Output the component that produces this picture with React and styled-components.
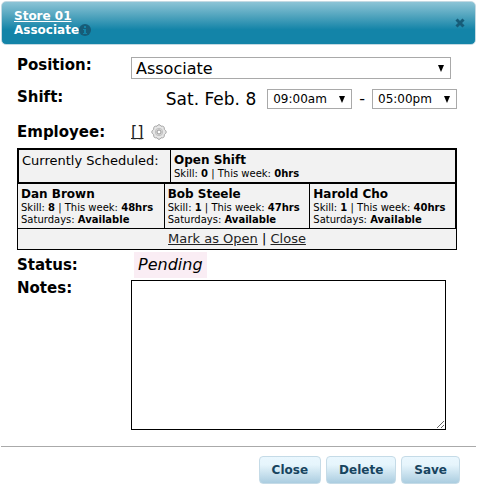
import React from "react";
import styled, { createGlobalStyle } from "styled-components";

const GlobalStyle = createGlobalStyle`
  *, *::before, *::after { box-sizing: border-box; }
  body {
    margin: 0;
    background: #fff;
    color: #000;
    font: 16px/20px "DejaVu Sans", Verdana, sans-serif;
  }
  button, select, textarea { font-family: inherit; color: inherit; margin: 0; }
`;

const Dialog = styled.section`
  padding: 1px;
`;

const Header = styled.header`
  display: flex;
  align-items: center;
  justify-content: space-between;
  height: 44px;
  padding: 0 10px 0 12px;
  border: 1px solid #c3d9e2;
  border-radius: 5px;
  background: linear-gradient(#8cc4d6 0%, #4fa3bd 34%, #1384a8 66%, #1384a8 100%);
  color: #fff;
`;

const Title = styled.h1`
  margin: 0;
  font-size: 12px;
  line-height: 14px;
`;

const TitleLink = styled.a`
  color: #fff;
`;

const TitleLine = styled.span`
  display: flex;
  align-items: center;
`;

const IconButton = styled.button`
  display: flex;
  padding: 0;
  border: 0;
  background: none;
  cursor: pointer;
`;

const Body = styled.div`
  padding: 12px 19px 16px 16px;
`;

const Row = styled.div`
  display: grid;
  grid-template-columns: 114px minmax(0, 1fr);
  align-items: ${(p) => p.$align || "start"};
  min-height: ${(p) => p.$height || "0"};
`;

const Label = styled.label`
  font-size: 15px;
  line-height: 16px;
  font-weight: bold;
`;

const SelectBox = styled.span`
  display: grid;
  align-items: center;
  width: ${(p) => p.$width || "auto"};
  margin-right: ${(p) => p.$right || "0"};

  > * { grid-area: 1 / 1; }
  > svg { justify-self: end; margin-right: 7px; pointer-events: none; }
`;

const Select = styled.select`
  appearance: none;
  width: 100%;
  height: ${(p) => (p.$small ? "20px" : "22px")};
  padding: 0 16px 0 ${(p) => (p.$small ? "5px" : "4px")};
  border: 1px solid #a9a9a9;
  border-radius: 0;
  background: #fff;
  font-size: ${(p) => (p.$small ? "12px" : "16px")};
`;

const ShiftFields = styled.div`
  display: flex;
  align-items: center;
  justify-content: flex-end;
  gap: 7px;
`;

const ShiftDate = styled.span`
  margin-right: 4px;
  font-size: 17px;
`;

const EmployeeValue = styled.div`
  display: flex;
  align-items: center;
  gap: 8px;
`;

const EmployeeLink = styled.a`
  color: #222;
  text-decoration-skip-ink: none;
`;

const Schedule = styled.div`
  border: 1px solid #000;
  background: #f2f2f2;
  font-size: 12px;
  line-height: 15px;
`;

const Table = styled.table`
  width: 100%;
  table-layout: fixed;
  border-collapse: separate;
  border-spacing: 0;
  border: solid #000;
  border-width: ${(p) => p.$border};
`;

const Cell = styled.td`
  padding: 3px 0 2px 3px;
  vertical-align: top;
  white-space: nowrap;

  & + & { border-left: 1px solid #000; }
`;

const HeadCell = styled.th`
  width: 152px;
  padding: 3px 0 2px 3px;
  border-right: 1px solid #000;
  font-size: 13px;
  font-weight: normal;
  text-align: left;
  vertical-align: top;
  white-space: nowrap;
`;

const Name = styled.div`
  font-weight: bold;
`;

const Detail = styled.div`
  font-size: 10px;
  line-height: 12px;
`;

const Actions = styled.div`
  text-align: center;
  font-size: 13px;
  line-height: 20px;

  a { color: #222; }
`;

const Status = styled.em`
  justify-self: start;
  margin-left: 3px;
  padding: 3px 4px;
  background: #faedf4;
`;

const Notes = styled.textarea`
  display: block;
  width: calc(100% - 11px);
  height: 150px;
  border: 1px solid #000;
  border-radius: 0;
  background: #fff;
  resize: both;
`;

const Footer = styled.footer`
  display: flex;
  justify-content: flex-end;
  gap: 5px;
  padding: 9px 16px 12px;
  border-top: 1px solid #aaa;
`;

const Button = styled.button`
  height: 28px;
  padding: 0 12px;
  border: 1px solid #c5dbe7;
  border-radius: 4px;
  background: linear-gradient(#eaf7fe 0%, #e6f5fc 30%, #abcde0 100%);
  && { color: #17445f; }
  font-size: 12px;
  font-weight: bold;
`;

const people = [
  { name: "Dan Brown", skill: 8, hours: "48hrs" },
  { name: "Bob Steele", skill: 1, hours: "47hrs" },
  { name: "Harold Cho", skill: 1, hours: "40hrs" },
];

function Arrow() {
  return (
    <svg width="6" height="7" viewBox="0 0 6 7" aria-hidden="true">
      <path d="M0 0h6L3 7z" fill="#000" />
    </svg>
  );
}

function InfoIcon() {
  return (
    <svg width="12" height="12" viewBox="0 0 12 12" aria-hidden="true">
      <circle cx="6" cy="6" r="6" fill="#175c78" />
      <path d="M5 2h2v2H5zM4 5h3v4h1v1H4V9h1V6H4z" fill="#1384a8" />
    </svg>
  );
}

function CloseIcon() {
  return (
    <svg width="10" height="10" viewBox="0 0 10 10" aria-hidden="true">
      <path d="M1.5 1.5l7 7M8.5 1.5l-7 7" stroke="#175c78" strokeWidth="3" />
    </svg>
  );
}

function GearIcon() {
  return (
    <svg width="16" height="16" viewBox="0 0 16 16" aria-hidden="true">
      <path
        d="M6 2.2Q8-1 10 2.2 13.8 1.6 13.3 5.4 17.2 8 13.3 10.6 13.8 14.4 10 13.8 8 17 6 13.8 2.2 14.4 2.7 10.6-1.2 8 2.7 5.4 2.2 1.6 6 2.2z"
        fill="#e6e6e6"
        stroke="#a6a6a6"
        strokeLinejoin="round"
      />
      <circle cx="8" cy="8" r="3.7" fill="#d8d8d8" stroke="#c2c2c2" />
      <circle cx="8" cy="8" r="2" fill="#fff" stroke="#9a9a9a" />
    </svg>
  );
}

function SelectField({ id, label, value, width, right, small }) {
  return (
    <SelectBox $width={width} $right={right}>
      <Select id={id} aria-label={label} defaultValue={value} $small={small}>
        <option>{value}</option>
      </Select>
      <Arrow />
    </SelectBox>
  );
}

function Skill({ skill, hours }) {
  return (
    <Detail>
      Skill: <b>{skill}</b> | This week: <b>{hours}</b>
    </Detail>
  );
}

export default function App() {
  return (
    <Dialog>
      <GlobalStyle />
      <Header>
        <Title>
          <TitleLink href="#store">Store 01</TitleLink>
          <TitleLine>
            Associate
            <IconButton aria-label="Information"><InfoIcon /></IconButton>
          </TitleLine>
        </Title>
        <IconButton aria-label="Close dialog"><CloseIcon /></IconButton>
      </Header>
      <Body>
        <Row $height="32px">
          <Label htmlFor="position">Position:</Label>
          <SelectField id="position" value="Associate" right="6px" />
        </Row>
        <Row $height="27px">
          <Label htmlFor="start">Shift:</Label>
          <ShiftFields>
            <ShiftDate>Sat. Feb. 8</ShiftDate>
            <SelectField id="start" label="Shift start" value="09:00am" width="85px" small />
            <span>-</span>
            <SelectField id="end" label="Shift end" value="05:00pm" width="85px" small />
          </ShiftFields>
        </Row>
        <Row $height="32px" $align="center">
          <Label as="span">Employee:</Label>
          <EmployeeValue>
            <EmployeeLink href="#employee">[]</EmployeeLink>
            <IconButton aria-label="Employee settings"><GearIcon /></IconButton>
          </EmployeeValue>
        </Row>
        <Schedule>
          <Table $border="1px">
            <tbody>
              <tr>
                <HeadCell scope="row">Currently Scheduled:</HeadCell>
                <Cell>
                  <Name>Open Shift</Name>
                  <Skill skill={0} hours="0hrs" />
                </Cell>
              </tr>
            </tbody>
          </Table>
          <Table $border="1px 1px 1px 0">
            <tbody>
              <tr>
                {people.map((p) => (
                  <Cell key={p.name}>
                    <Name>{p.name}</Name>
                    <Skill skill={p.skill} hours={p.hours} />
                    <Detail>Saturdays: <b>Available</b></Detail>
                  </Cell>
                ))}
              </tr>
            </tbody>
          </Table>
          <Actions>
            <a href="#open">Mark as Open</a> | <a href="#close">Close</a>
          </Actions>
        </Schedule>
        <Row $height="30px" $align="center">
          <Label as="span">Status:</Label>
          <Status>Pending</Status>
        </Row>
        <Row>
          <Label htmlFor="notes">Notes:</Label>
          <Notes id="notes" />
        </Row>
      </Body>
      <Footer>
        <Button>Close</Button>
        <Button>Delete</Button>
        <Button>Save</Button>
      </Footer>
    </Dialog>
  );
}
